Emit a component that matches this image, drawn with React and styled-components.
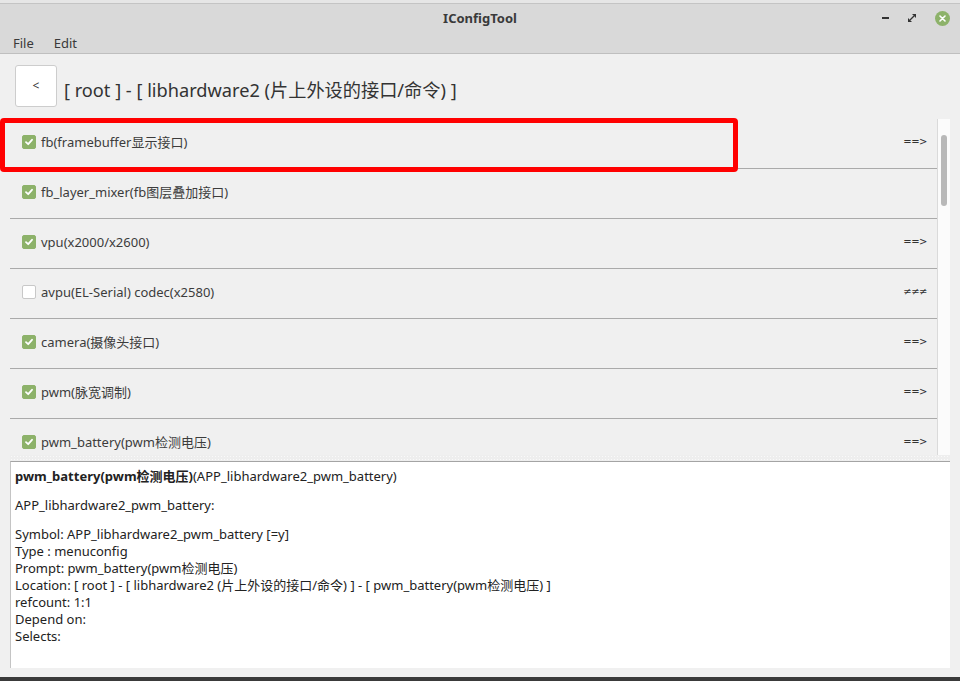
import styled, { createGlobalStyle } from 'styled-components';

const GlobalStyle = createGlobalStyle`
    html, body {
        margin: 0;
        padding: 0;
        background: #f0f0f0;
    }
    * {
        box-sizing: border-box;
    }
`;

const FONT = `"Noto Sans", "Noto Sans CJK SC", sans-serif`;

const Window = styled.div`
    position: relative;
    width: 960px;
    height: 681px;
    display: flex;
    flex-direction: column;
    background: #f0f0f0;
    font-family: ${FONT};
    color: #3c3c3c;
    overflow: hidden;
`;

const TitleBar = styled.div`
    height: 32px;
    display: grid;
    grid-template-columns: 1fr auto 1fr;
    align-items: center;
    background: #d9d9d9;
    border-top: 3px solid #e6e6e6;
    box-shadow: inset 0 1px 0 #c4c4c4;
`;

const Title = styled.div`
    grid-column: 2;
    font-size: 13px;
    font-weight: bold;
    color: #3a3a3a;
    padding-top: 1px;
`;

const Controls = styled.div`
    grid-column: 3;
    justify-self: end;
    display: flex;
    align-items: center;
    gap: 19px;
    padding-right: 10px;
    padding-top: 1px;
`;

const Minimize = styled.div`
    width: 7px;
    height: 2px;
    background: #333;
`;

const CloseBtn = styled.div`
    width: 15px;
    height: 15px;
    border-radius: 50%;
    background: #8db26a;
    display: flex;
    align-items: center;
    justify-content: center;
`;

const MenuBar = styled.div`
    height: 22px;
    display: flex;
    align-items: center;
    gap: 20px;
    padding-left: 13px;
    background: #d9d9d9;
    border-bottom: 1px solid #bfbfbf;
    font-size: 13px;
    color: #3a3a3a;
`;

const Header = styled.div`
    height: 65px;
    display: flex;
    align-items: center;
    gap: 7px;
    padding: 0 0 1px 15px;
`;

const BackButton = styled.div`
    width: 42px;
    height: 42px;
    background: #fff;
    border: 1px solid #cdcdcd;
    border-radius: 3px;
    display: flex;
    align-items: center;
    justify-content: center;
    font-size: 12px;
    color: #333;
    padding-bottom: 2px;
`;

const Crumb = styled.div`
    font-size: 18.2px;
    color: #333;
    padding-top: 5px;
`;

const ListPane = styled.div`
    height: 336px;
    margin: 0 10px 0 10px;
    display: flex;
`;

const Rows = styled.div`
    flex: 1;
    overflow: hidden;
`;

const Row = styled.div`
    height: 50px;
    display: flex;
    align-items: center;
    gap: 5px;
    padding: 0 10px 4px 12px;
    border-bottom: 1px solid #aaaaaa;
    font-size: 13px;
`;

const Check = styled.div`
    width: 14px;
    height: 14px;
    border-radius: 2px;
    flex: none;
    display: flex;
    align-items: center;
    justify-content: center;
    background: ${p => (p.$on ? '#8db26a' : '#ffffff')};
    border: 1px solid ${p => (p.$on ? '#8db26a' : '#c8c8c8')};
`;

const Label = styled.span`
    flex: 1;
`;

const Mark = styled.span`
    font-family: "DejaVu Sans", sans-serif;
    font-size: 10px;
    color: #333;
    letter-spacing: -0.5px;
`;

const ScrollTrack = styled.div`
    width: 13px;
    background: #fbfbfb;
    border-left: 1px solid #dadada;
    padding: 16px 0 0 3px;
`;

const Thumb = styled.div`
    width: 6px;
    height: 71px;
    border-radius: 3px;
    background: #b8b8b8;
`;

const Splitter = styled.div`
    height: 6px;
    margin: 0 10px;
    background-color: #eeeeee;
    background-image: radial-gradient(circle, #fafafa 0.8px, transparent 1px);
    background-size: 3px 3px;
`;

const Detail = styled.div`
    height: 207px;
    margin: 0 10px;
    background: #fff;
    border-top: 1px solid #a4a4a4;
    border-left: 1px solid #c4c4c4;
    padding: 6px 4px;
    font-size: 13px;
    color: #222;
    line-height: 17px;
`;

const Para = styled.p`
    margin: 0 0 12px 0;
`;

const Spacer = styled.div`
    flex: 1;
`;

const Taskbar = styled.div`
    height: 4px;
    background: #3a3a3a;
`;

const Highlight = styled.div`
    position: absolute;
    left: 0;
    top: 118px;
    width: 738px;
    height: 54px;
    border: 5px solid #ff0000;
    border-radius: 4px;
    pointer-events: none;
`;

const items = [
    { on: true, label: 'fb(framebuffer显示接口)', mark: '==>' },
    { on: true, label: 'fb_layer_mixer(fb图层叠加接口)', mark: '' },
    { on: true, label: 'vpu(x2000/x2600)', mark: '==>' },
    { on: false, label: 'avpu(EL-Serial) codec(x2580)', mark: '≠≠≠' },
    { on: true, label: 'camera(摄像头接口)', mark: '==>' },
    { on: true, label: 'pwm(脉宽调制)', mark: '==>' },
    { on: true, label: 'pwm_battery(pwm检测电压)', mark: '==>' },
    { on: true, label: 'i2c(i2c总线接口)', mark: '==>' },
];

function CheckIcon() {
    return (
        <svg width="10" height="10" viewBox="0 0 10 10">
            <path d="M2 5.2 L4.2 7.2 L8 2.8" fill="none" stroke="#fff" strokeWidth="1.8" strokeLinecap="round" strokeLinejoin="round" />
        </svg>
    );
}

function App() {
    return (
        <Window>
            <GlobalStyle />
            <TitleBar>
                <Title>IConfigTool</Title>
                <Controls>
                    <Minimize />
                    <svg width="8" height="8" viewBox="0 0 8 8">
                        <path d="M4 0 H8 V4 Z M0 4 V8 H4 Z" fill="#333" />
                        <path d="M6 2 L2 6" stroke="#333" strokeWidth="1.2" />
                    </svg>
                    <CloseBtn>
                        <svg width="7" height="7" viewBox="0 0 7 7">
                            <path d="M1 1 L6 6 M6 1 L1 6" stroke="#fff" strokeWidth="1.6" strokeLinecap="round" />
                        </svg>
                    </CloseBtn>
                </Controls>
            </TitleBar>
            <MenuBar>
                <span>File</span>
                <span>Edit</span>
            </MenuBar>
            <Header>
                <BackButton>&lt;</BackButton>
                <Crumb>[ root ] - [ libhardware2 (片上外设的接口/命令) ]</Crumb>
            </Header>
            <ListPane>
                <Rows>
                    {items.map((it, i) => (
                        <Row key={i}>
                            <Check $on={it.on}>{it.on && <CheckIcon />}</Check>
                            <Label>{it.label}</Label>
                            <Mark>{it.mark}</Mark>
                        </Row>
                    ))}
                </Rows>
                <ScrollTrack>
                    <Thumb />
                </ScrollTrack>
            </ListPane>
            <Splitter />
            <Detail>
                <Para><b>pwm_battery(pwm检测电压)</b>(APP_libhardware2_pwm_battery)</Para>
                <Para>APP_libhardware2_pwm_battery:</Para>
                <Para>
                    Symbol: APP_libhardware2_pwm_battery [=y]<br />
                    Type : menuconfig<br />
                    Prompt: pwm_battery(pwm检测电压)<br />
                    Location: [ root ] - [ libhardware2 (片上外设的接口/命令) ] - [ pwm_battery(pwm检测电压) ]<br />
                    refcount: 1:1<br />
                    Depend on:<br />
                    Selects:
                </Para>
            </Detail>
            <Spacer />
            <Taskbar />
            <Highlight />
        </Window>
    );
}

export default App;
